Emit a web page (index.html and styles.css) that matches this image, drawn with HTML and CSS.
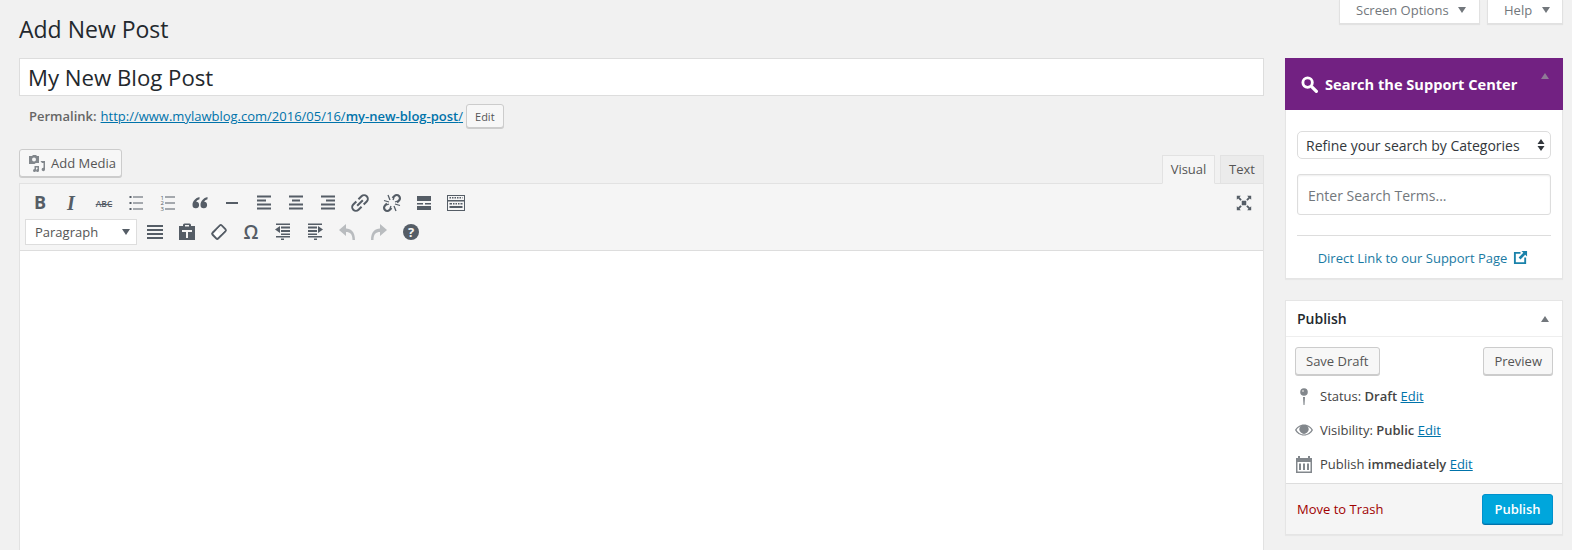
FILE: index.html
```html
<!DOCTYPE html>
<html lang="en">
<head>
    <meta charset="UTF-8">
    <title>Add New Post</title>
    <link rel="stylesheet" href="styles.css">
</head>
<body>

    <div class="top-bar">
        <h1>Add New Post</h1>
        <div class="screen-links">
            <a class="screen-tab tab-options">Screen Options <span class="down-caret"></span></a>
            <a class="screen-tab tab-help">Help <span class="down-caret"></span></a>
        </div>
    </div>

    <div class="columns">

        <!-- main column -->
        <div class="main-col">
            <div class="post-title">My New Blog Post</div>

            <div class="permalink">
                <strong>Permalink:</strong>
                <a href="#">http://www.mylawblog.com/2016/05/16/<b>my-new-blog-post</b>/</a>
                <span class="btn btn-small">Edit</span>
            </div>

            <div class="editor-head">
                <span class="btn btn-media">
                    <svg class="media-icon" viewBox="0 0 18 18"><path d="M1 2h3l1-1h3l1 1h2v7H8.500a3 3 0 0 0-2 1H1z"/><circle cx="6" cy="5.500" r="2" fill="#f7f7f7"/><path d="M12.500 7H17v8.500a1.700 1.700 0 1 1-1.500-1.700V9h-1.500zM6.500 12H11v4.500A1.500 1.500 0 1 1 9.500 15v-1.500H8V16.500A1.500 1.500 0 1 1 6.500 15z"/></svg>
                    Add Media
                </span>
                <div class="editor-tabs">
                    <span class="editor-tab is-active">Visual</span>
                    <span class="editor-tab">Text</span>
                </div>
            </div>

            <div class="editor">
                <div class="toolbar">
                    <div class="tool-rows">
                        <div class="tool-row">
                            <span class="tool tool-b">B</span>
                            <span class="tool tool-i">I</span>
                            <span class="tool tool-abc">ABC</span>
                            <span class="tool"><svg viewBox="0 0 20 20"><path d="M3.500 3h2v2h-2zM3.500 9h2v2h-2zM3.500 15h2v2h-2zM7 3.500h10v1H7zM7 9.500h10v1H7zM7 15.500h10v1H7z"/></svg></span>
                            <span class="tool"><svg viewBox="0 0 20 20"><text class="ol-num" x="2.500" y="6.500">1</text><text class="ol-num" x="2.500" y="12">2</text><text class="ol-num" x="2.500" y="17.500">3</text><path d="M7 3.500h10v1H7zM7 9.500h10v1H7zM7 15.500h10v1H7z"/></svg></span>
                            <span class="tool"><svg viewBox="0 0 20 20"><path d="M9.500 4C5.500 5 2.500 8 2.500 12a3.300 3.300 0 1 0 3.700-3.300c.4-1 1.600-1.900 3.300-2.400zM17.500 4c-4 1-7 4-7 8a3.300 3.300 0 1 0 3.700-3.300c.4-1 1.600-1.900 3.300-2.400z"/></svg></span>
                            <span class="tool"><svg viewBox="0 0 20 20"><path d="M4 9h12v2H4z"/></svg></span>
                            <span class="tool"><svg viewBox="0 0 20 20"><path d="M3 3h14v2H3zM3 7h9v2H3zM3 11h14v2H3zM3 15h14v2H3z" transform="translate(0 -.5)"/></svg></span>
                            <span class="tool"><svg viewBox="0 0 20 20"><path d="M3 3h14v2H3zM6 7h8v2H6zM3 11h14v2H3zM3 15h14v2H3z" transform="translate(0 -.5)"/></svg></span>
                            <span class="tool"><svg viewBox="0 0 20 20"><path d="M3 3h14v2H3zM8 7h9v2H8zM3 11h14v2H3zM3 15h14v2H3z" transform="translate(0 -.5)"/></svg></span>
                            <span class="tool"><svg class="line-icon" viewBox="0 0 20 20"><g transform="rotate(-45 10 10)"><path d="M8.500 6.300H4.200a3.700 3.700 0 0 0 0 7.400h4.300M11.500 6.300h4.300a3.700 3.700 0 0 1 0 7.400h-4.300M6 10h8" stroke-width="2"/></g></svg></span>
                            <span class="tool"><svg class="line-icon" viewBox="0 0 20 20"><path d="M10.500 5l2-2a3.200 3.200 0 0 1 4.500 0 3.200 3.200 0 0 1 0 4.500l-2 2M9.500 15l-2 2A3.200 3.200 0 0 1 3 17a3.200 3.200 0 0 1 0-4.500l2-2" stroke-width="2.200"/><path d="M2 7.500l5 1.500M6 2l2 5M18 12.500L13 11M14 18l-2-5M7 11l-2.500 1M9 13l-1 2.500M13 9l2.500-1M11 7l1-2.500" stroke-width="1.300"/></svg></span>
                            <span class="tool"><svg viewBox="0 0 20 20"><path d="M3 3h14v5H3zM3 10h6v1.500H3zM11 10h6v1.500h-6zM3 13h14v4H3z"/></svg></span>
                            <span class="tool"><svg viewBox="0 0 20 20"><path fill-rule="evenodd" d="M1 2h18v16H1zM2 3v4h16V3zM2 8.500V17h16V8.500zM3.500 4h1.500v1.500H3.500zm2.500 0h1.500v1.500H6zm2.500 0H10v1.500H8.500zm2.500 0h1.500v1.500H11zm2.500 0H15v1.500h-1.500zm2.500 0h.5v1.500H16zM3.500 10H6v1.500H3.500zm3.500 0h1.500v1.500H7zm2.500 0H11v1.500H9.500zm2.500 0h1.500v1.500H12zm2.500 0h2v1.500h-2zM3.500 13h13v2h-13z"/></svg></span>
                        </div>
                        <div class="tool-row">
                            <span class="format-select">Paragraph <span class="down-caret"></span></span>
                            <span class="tool"><svg viewBox="0 0 20 20"><path d="M2 3h16v2H2zM2 7h16v2H2zM2 11h16v2H2zM2 15h16v2H2z"/></svg></span>
                            <span class="tool"><svg viewBox="0 0 20 20"><path fill-rule="evenodd" d="M2 4h4V3a1.500 1.500 0 0 1 1.500-1.500h5A1.500 1.500 0 0 1 14 3v1h4v14H2zM8 3v1.500h4V3zM5 8v2h4v6h2v-6h4V8z"/></svg></span>
                            <span class="tool"><svg class="line-icon" viewBox="0 0 20 20"><g transform="rotate(-45 10 10)"><rect x="3.500" y="6" width="13" height="8" rx="1.500" fill="#ffffff" stroke-width="2"/><path d="M9.500 7h6v6h-6z" fill="#f5f5f5" stroke="none"/></g></svg></span>
                            <span class="tool tool-omega">Ω</span>
                            <span class="tool"><svg viewBox="0 0 20 20"><path d="M3 2h14v1.500H3zM8 5h9v2H8zM2 8l5-3.500v7zM8 8.500h9v2H8zM8 12h9v1.500H8zM3 14.500h14V16H3zM8 17h3v1.500H8z" transform="translate(0 -.5)"/></svg></span>
                            <span class="tool"><svg viewBox="0 0 20 20"><path d="M3 2h14v1.500H3zM3 5h9v2H3zM18 8l-5-3.500v7zM3 8.500h9v2H3zM3 12h9v1.500H3zM3 14.500h14V16H3zM9 17h3v1.500H9z" transform="translate(0 -.5)"/></svg></span>
                            <span class="tool is-off"><svg viewBox="0 0 20 20"><path d="M9 2L2 8l7 6v-4c4 0 6.500 2 6.500 8H18c0-8-4-11.500-9-11.500z"/></svg></span>
                            <span class="tool is-off"><svg viewBox="0 0 20 20"><path d="M11 2l7 6-7 6v-4c-4 0-6.500 2-6.500 8H2c0-8 4-11.500 9-11.500z"/></svg></span>
                            <span class="tool"><svg viewBox="0 0 20 20"><circle cx="10" cy="10" r="8"/><text class="help-mark" x="10" y="14.500">?</text></svg></span>
                        </div>
                    </div>
                    <span class="tool tool-full"><svg viewBox="0 0 20 20"><path d="M7.500 7.500h5v5h-5zM2 2h4.500L5 3.500 7.500 6 6 7.500 3.500 5 2 6.500zM18 2v4.500L16.500 5 14 7.500 12.500 6 15 3.500 13.500 2zM2 18v-4.500L3.500 15 6 12.500 7.500 14 5 16.500 6.500 18zM18 18h-4.500l1.500-1.500-2.500-2.500 1.500-1.500 2.500 2.500 1.500-1.500z"/></svg></span>
                </div>
                <div class="editor-body"></div>
            </div>
        </div>

        <!-- sidebar -->
        <div class="side-col">
            <div class="box support-box">
                <div class="support-head">
                    <svg class="search-icon" viewBox="0 0 18 18"><circle cx="7" cy="7" r="5" fill="none" stroke="#fff" stroke-width="3"/><path d="M10 12.500l2.500-2.500 5 5a1.700 1.700 0 0 1-2.500 2.500z" fill="#fff"/></svg>
                    <span>Search the Support Center</span>
                    <span class="up-caret support-caret"></span>
                </div>
                <div class="support-body">
                    <div class="cat-select">
                        Refine your search by Categories
                        <svg class="select-arrows" viewBox="0 0 8 14"><path d="M4 1l3.500 5h-7zM4 13L.5 8h7z"/></svg>
                    </div>
                    <div class="search-field">Enter Search Terms...</div>
                    <div class="support-link">
                        <a href="#">Direct Link to our Support Page</a>
                        <svg class="ext-icon" viewBox="0 0 16 16"><path d="M8 3H2v11h11V8" fill="none" stroke="#1a82aa" stroke-width="2"/><path d="M9 1h6v6l-2-2-5 5-2-2 5-5z" fill="#1a82aa"/></svg>
                    </div>
                </div>
            </div>

            <div class="box publish-box">
                <div class="publish-head">
                    <span>Publish</span>
                    <span class="up-caret"></span>
                </div>
                <div class="publish-body">
                    <div class="publish-btns">
                        <span class="btn">Save Draft</span>
                        <span class="btn">Preview</span>
                    </div>
                    <div class="misc-row">
                        <svg class="misc-icon" viewBox="0 0 20 20"><path d="M9 11h2l-.5 8h-1z"/><circle cx="10" cy="6" r="3.800"/><circle cx="9" cy="5" r="1" fill="#ccc"/></svg>
                        <span>Status: <b>Draft</b> <a href="#">Edit</a></span>
                    </div>
                    <div class="misc-row">
                        <svg class="misc-icon" viewBox="0 0 20 20"><path fill-rule="evenodd" d="M10 4.500c4 0 7.500 2.500 9 5.500-1.500 3-5 5.500-9 5.500S2.500 13 1 10c1.500-3 5-5.500 9-5.500zM2.500 10C4 12.500 6.700 14.500 10 14.500s6-2 7.500-4.500C16.500 8.200 15 7 13.400 6.200a4.500 4.500 0 1 1-6.800 0C5 7 3.500 8.200 2.500 10z"/></svg>
                        <span>Visibility: <b>Public</b> <a href="#">Edit</a></span>
                    </div>
                    <div class="misc-row">
                        <svg class="misc-icon" viewBox="0 0 20 20"><path fill-rule="evenodd" d="M2 4h2V2h2v2h8V2h2v2h2v15H2zM3.500 8v9.500h13V8zM5 9.500h2v6.500H5zm4 0h2v6.500H9zm4 0h2v6.500h-2z"/></svg>
                        <span>Publish <b>immediately</b> <a href="#">Edit</a></span>
                    </div>
                </div>
                <div class="publish-foot">
                    <a class="trash-link" href="#">Move to Trash</a>
                    <span class="btn btn-primary">Publish</span>
                </div>
            </div>
        </div>
    </div>

</body>
</html>
```

FILE: styles.css
```css
body {
    font-family: "Open Sans", Arial, sans-serif;
    font-size: 13px;
    color: #444444;
    background-color: #f1f1f1;
    margin: 0;
    height: 550px;
    overflow: hidden;
}

a {
    color: #0073aa;
}

b, strong {
    font-weight: 600;
}

/* top bar */
.top-bar {
    display: flex;
    justify-content: space-between;
    align-items: flex-start;
    height: 58px;
    padding: 0 9px 0 19px;
}

h1 {
    font-size: 23px;
    font-weight: 400;
    line-height: 29px;
    color: #23282d;
    margin: 15px 0 0;
}

.screen-links {
    display: flex;
    gap: 7px;
}

.screen-tab {
    display: flex;
    align-items: center;
    justify-content: space-between;
    height: 24px;
    box-sizing: border-box;
    padding: 0 12px 3px 16px;
    background-color: #ffffff;
    border: 1px solid #e1e1e1;
    border-top: none;
    box-shadow: 0 1px 1px rgba(0, 0, 0, 0.06);
    color: #72777c;
}

.tab-options {
    width: 141px;
    padding-right: 13px;
}

.tab-help {
    width: 76px;
}

.down-caret {
    width: 0;
    height: 0;
    border-left: 4px solid transparent;
    border-right: 4px solid transparent;
    border-top: 6px solid #72777c;
}

.up-caret {
    width: 0;
    height: 0;
    border-left: 4px solid transparent;
    border-right: 4px solid transparent;
    border-bottom: 6px solid #72777c;
}

/* columns */
.columns {
    display: flex;
    gap: 21px;
    padding-left: 19px;
}

.main-col {
    width: 1245px;
}

.side-col {
    width: 278px;
}

.post-title {
    height: 38px;
    box-sizing: border-box;
    padding-left: 8px;
    font-size: 22.200px;
    line-height: 37px;
    color: #23282d;
    background-color: #ffffff;
    border: 1px solid #dddddd;
}

.permalink {
    display: flex;
    align-items: center;
    gap: 4px;
    height: 24px;
    margin-top: 8px;
    padding-left: 10px;
    color: #666666;
}

.permalink a {
    color: #0073aa;
}

/* buttons */
.btn {
    display: inline-flex;
    align-items: center;
    justify-content: center;
    box-sizing: border-box;
    height: 28px;
    padding: 0 10px;
    color: #555555;
    background-color: #f7f7f7;
    border: 1px solid #cccccc;
    border-radius: 3px;
    box-shadow: 0 1px 0 #cccccc;
}

.btn-small {
    height: 24px;
    margin-left: -1px;
    padding: 0 8px;
    font-size: 11px;
}

.btn-media {
    justify-content: flex-start;
    gap: 5px;
    width: 103px;
    padding: 0 0 0 8px;
    margin-bottom: 7px;
}

.media-icon {
    width: 18px;
    height: 18px;
    fill: #82878c;
}

.btn-primary {
    width: 71px;
    height: 30px;
    padding: 0;
    font-weight: 600;
    color: #ffffff;
    background-color: #00a6dc;
    border-color: #0091cd;
    box-shadow: 0 1px 0 #0073aa;
}

/* editor */
.editor-head {
    display: flex;
    justify-content: space-between;
    align-items: flex-end;
    height: 29px;
    margin-top: 27px;
    margin-bottom: -1px;
}

.editor-tabs {
    display: flex;
    gap: 5px;
    position: relative;
    z-index: 1;
}

.editor-tab {
    display: flex;
    align-items: center;
    justify-content: center;
    box-sizing: border-box;
    width: 44px;
    height: 29px;
    padding-bottom: 2px;
    color: #555555;
    background-color: #ebebeb;
    border: 1px solid #e2e2e2;
}

.editor-tab.is-active {
    width: 53px;
    background-color: #f5f5f5;
    border-bottom-color: #f5f5f5;
}

.editor {
    background-color: #ffffff;
    border: 1px solid #e2e2e2;
}

.toolbar {
    display: flex;
    justify-content: space-between;
    height: 67px;
    box-sizing: border-box;
    padding: 5px 3px 0 4px;
    background-color: #f5f5f5;
    border-bottom: 1px solid #dddddd;
}

.tool-rows {
    display: flex;
    flex-direction: column;
    gap: 1px;
}

.tool-row {
    display: flex;
    align-items: center;
    height: 28px;
}

.tool {
    display: flex;
    align-items: center;
    justify-content: center;
    width: 32px;
    height: 28px;
    color: #555d66;
    fill: #555d66;
}

.tool svg {
    width: 20px;
    height: 20px;
}

.tool.is-off {
    fill: #b9bcbf;
}

.tool svg.line-icon {
    fill: none;
    stroke: #555d66;
}

.tool-b {
    font-size: 18px;
    font-weight: 700;
    padding-bottom: 2px;
    box-sizing: border-box;
}

.tool-i {
    font-size: 20px;
    font-weight: 700;
    font-style: italic;
    font-family: "Liberation Serif", serif;
    padding-right: 2px;
    box-sizing: border-box;
}

.tool-abc {
    font-size: 8.500px;
    font-weight: 600;
    text-decoration: line-through;
}

.tool-omega {
    font-size: 19px;
    font-weight: 600;
}

.ol-num {
    font-size: 6px;
    fill: #555d66;
}

.help-mark {
    font-size: 13px;
    font-weight: 700;
    text-anchor: middle;
    fill: #f5f5f5;
}

.tool.tool-full svg {
    width: 18px;
    height: 18px;
}

.format-select {
    display: flex;
    align-items: center;
    justify-content: space-between;
    box-sizing: border-box;
    width: 112px;
    height: 26px;
    margin: 0 2px 0 1px;
    padding: 0 6px 0 9px;
    color: #555555;
    background-color: #ffffff;
    border: 1px solid #dddddd;
}

.format-select .down-caret {
    border-top-color: #555d66;
}

.editor-body {
    height: 400px;
}

/* sidebar boxes */
.box {
    background-color: #ffffff;
    border: 1px solid #e5e5e5;
    border-top: none;
    box-shadow: 0 1px 1px rgba(0, 0, 0, 0.04);
}

.support-head {
    display: flex;
    align-items: center;
    gap: 7px;
    height: 52px;
    padding-left: 16px;
    position: relative;
    font-size: 14.600px;
    font-weight: 700;
    color: #ffffff;
    background-color: #722182;
    margin: 0 -1px 0 -1px;
}

.search-icon {
    width: 17px;
    height: 17px;
}

.support-caret {
    position: absolute;
    top: 15px;
    right: 14px;
    border-bottom-color: #8f7a96;
}

.support-body {
    height: 168px;
    box-sizing: border-box;
    padding: 21px 11px 0;
}

.cat-select {
    display: flex;
    align-items: center;
    justify-content: space-between;
    box-sizing: border-box;
    height: 28px;
    padding: 0 5px 0 8px;
    font-size: 14px;
    color: #32373c;
    border: 1px solid #dddddd;
    border-radius: 5px;
}

.select-arrows {
    width: 8px;
    height: 14px;
    fill: #32373c;
}

.search-field {
    display: flex;
    align-items: center;
    box-sizing: border-box;
    height: 41px;
    margin-top: 15px;
    padding: 1px 0 0 10px;
    font-size: 14px;
    color: #72777c;
    border: 1px solid #dddddd;
    border-radius: 3px;
    box-shadow: inset 0 1px 2px rgba(0, 0, 0, 0.07);
}

.support-link {
    display: flex;
    align-items: center;
    justify-content: center;
    gap: 6px;
    height: 43px;
    margin-top: 20px;
    padding-right: 2px;
    border-top: 1px solid #dddddd;
}

.support-link a {
    text-decoration: none;
    color: #1a7aa3;
}

.ext-icon {
    width: 15px;
    height: 15px;
}

.publish-box {
    margin-top: 21px;
    border-top: 1px solid #e5e5e5;
}

.publish-head {
    display: flex;
    justify-content: space-between;
    align-items: center;
    height: 35px;
    padding: 0 13px 0 11px;
    font-size: 14px;
    font-weight: 600;
    color: #23282d;
    border-bottom: 1px solid #eeeeee;
}

.publish-body {
    padding: 10px 9px 0;
    height: 146px;
    box-sizing: border-box;
}

.publish-btns {
    display: flex;
    justify-content: space-between;
    margin-bottom: 4px;
}

.misc-row {
    display: flex;
    align-items: center;
    gap: 6px;
    height: 34px;
    margin-left: -1px;
    color: #444444;
}

.misc-icon {
    width: 20px;
    height: 20px;
    fill: #82878c;
}

.publish-foot {
    display: flex;
    justify-content: space-between;
    align-items: center;
    height: 50px;
    padding: 0 9px 0 11px;
    background-color: #f5f5f5;
    border-top: 1px solid #dddddd;
}

.trash-link {
    color: #a00000;
    text-decoration: none;
}
```
